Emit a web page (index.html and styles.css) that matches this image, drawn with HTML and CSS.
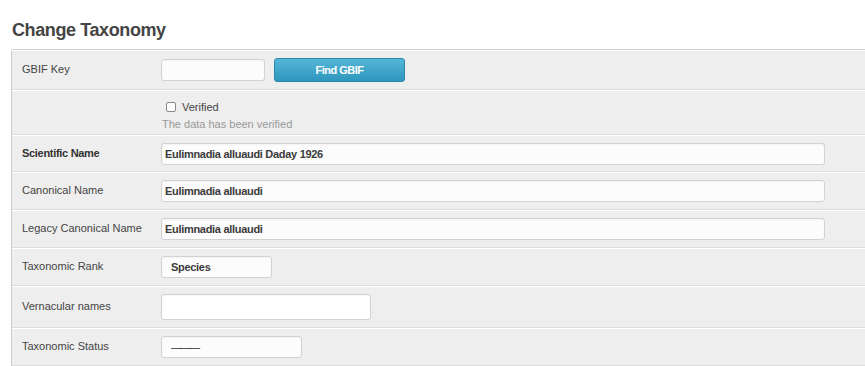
FILE: index.html
```html
<!DOCTYPE html>
<html lang="en">
  <head>
    <meta charset="utf-8">
    <title>Change Taxonomy</title>
    <link rel="stylesheet" href="styles.css">
  </head>
  <body>
    <div class="page">

      <!-- Page title -->
      <h1 class="title">Change Taxonomy</h1>

      <!-- Taxonomy form -->
      <div class="module">
        <div class="row">
          <label class="row-label" for="gbif-key">GBIF Key</label>
          <div class="field">
            <input type="text" id="gbif-key" class="input input-key">
            <button type="button" class="btn-find">Find GBIF</button>
          </div>
        </div>

        <div class="row row-check">
          <span class="row-label"></span>
          <div class="field field-stack">
            <label class="check">
              <input type="checkbox" class="check-box">
              <span>Verified</span>
            </label>
            <p class="help">The data has been verified</p>
          </div>
        </div>

        <div class="row row-tight">
          <label class="row-label required" for="sci-name">Scientific Name</label>
          <div class="field">
            <input type="text" id="sci-name" class="input input-wide" value="Eulimnadia alluaudi Daday 1926">
          </div>
        </div>

        <div class="row">
          <label class="row-label" for="canon-name">Canonical Name</label>
          <div class="field">
            <input type="text" id="canon-name" class="input input-wide" value="Eulimnadia alluaudi">
          </div>
        </div>

        <div class="row">
          <label class="row-label" for="legacy-name">Legacy Canonical Name</label>
          <div class="field">
            <input type="text" id="legacy-name" class="input input-wide" value="Eulimnadia alluaudi">
          </div>
        </div>

        <div class="row">
          <label class="row-label">Taxonomic Rank</label>
          <div class="field">
            <div class="select select-rank">Species</div>
          </div>
        </div>

        <div class="row">
          <label class="row-label" for="vern-names">Vernacular names</label>
          <div class="field">
            <input type="text" id="vern-names" class="input input-vern">
          </div>
        </div>

        <div class="row">
          <label class="row-label">Taxonomic Status</label>
          <div class="field">
            <div class="select select-status"><span class="dash">———</span></div>
          </div>
        </div>
      </div>

    </div>
  </body>
</html>
```

FILE: styles.css
```css
body {
  margin: 0;
  background-color: #fff;
  color: #444;
  font-family: "Liberation Sans", Arial, sans-serif;
  overflow: hidden;
}

.page {
  padding-left: 11px;
}

/* Page title */
.title {
  margin: 20px 0 9px 1px;
  font-size: 18px;
  line-height: 20px;
  font-weight: bold;
  letter-spacing: -0.4px;
  color: #444;
}

/* Form module */
.module {
  background-color: #eee;
  border-top: 1px solid #ccc;
  border-left: 1px solid #ccc;
  border-radius: 3px 0 0 0;
}

.row {
  display: flex;
  align-items: center;
  padding: 7px 0;
  border-top: 1px solid #fff;
  border-bottom: 1px solid #ddd;
}

.row-tight {
  padding-bottom: 6px;
}

.row-check {
  align-items: flex-start;
  padding: 8px 0 3px;
}

.row-label {
  width: 139px;
  padding-left: 10px;
  padding-bottom: 2px;
  flex-shrink: 0;
  font-size: 11px;
  line-height: 13px;
  color: #444;
}

.row-label.required {
  font-weight: bold;
  letter-spacing: -0.3px;
  color: #333;
}

.field {
  display: flex;
  align-items: center;
  gap: 9px;
}

.field-stack {
  flex-direction: column;
  align-items: flex-start;
  gap: 0;
}

/* Inputs */
.input,
.select {
  box-sizing: border-box;
  height: 22px;
  padding: 0 3px;
  border: 1px solid #d2d2d2;
  border-radius: 3px;
  background-color: #fcfcfc;
  box-shadow: inset 0 1px 2px rgba(0, 0, 0, 0.04);
  font-family: "Liberation Sans", Arial, sans-serif;
  font-size: 11px;
  font-weight: bold;
  letter-spacing: -0.3px;
  color: #3a3a3a;
  outline: none;
}

.input-key {
  width: 104px;
}

.input-wide {
  width: 664px;
}

.input-vern {
  width: 210px;
  height: 26px;
  background-color: #fff;
}

.select {
  display: flex;
  align-items: center;
  padding: 0 9px;
}

.select-rank {
  width: 111px;
}

.select-status {
  width: 141px;
}

.dash {
  font-weight: normal;
  letter-spacing: -2px;
  color: #333;
}

/* Find GBIF button */
.btn-find {
  box-sizing: border-box;
  width: 131px;
  height: 24px;
  border: 1px solid #2a88ab;
  border-radius: 3px;
  background: linear-gradient(#55b7d8, #2e96bd);
  color: #fff;
  font-family: "Liberation Sans", Arial, sans-serif;
  font-size: 11px;
  font-weight: bold;
  letter-spacing: -0.5px;
  cursor: pointer;
}

/* Verified checkbox */
.check {
  display: flex;
  align-items: center;
  height: 16px;
  margin-left: 5px;
  font-size: 11px;
  color: #444;
}

.check-box {
  appearance: none;
  width: 10px;
  height: 10px;
  margin: 0 6px 0 0;
  border: 1px solid #888;
  border-radius: 2px;
  background-color: #fff;
}

.help {
  margin: 2px 0 0 1px;
  font-size: 11px;
  line-height: 14px;
  color: #999;
}
```
